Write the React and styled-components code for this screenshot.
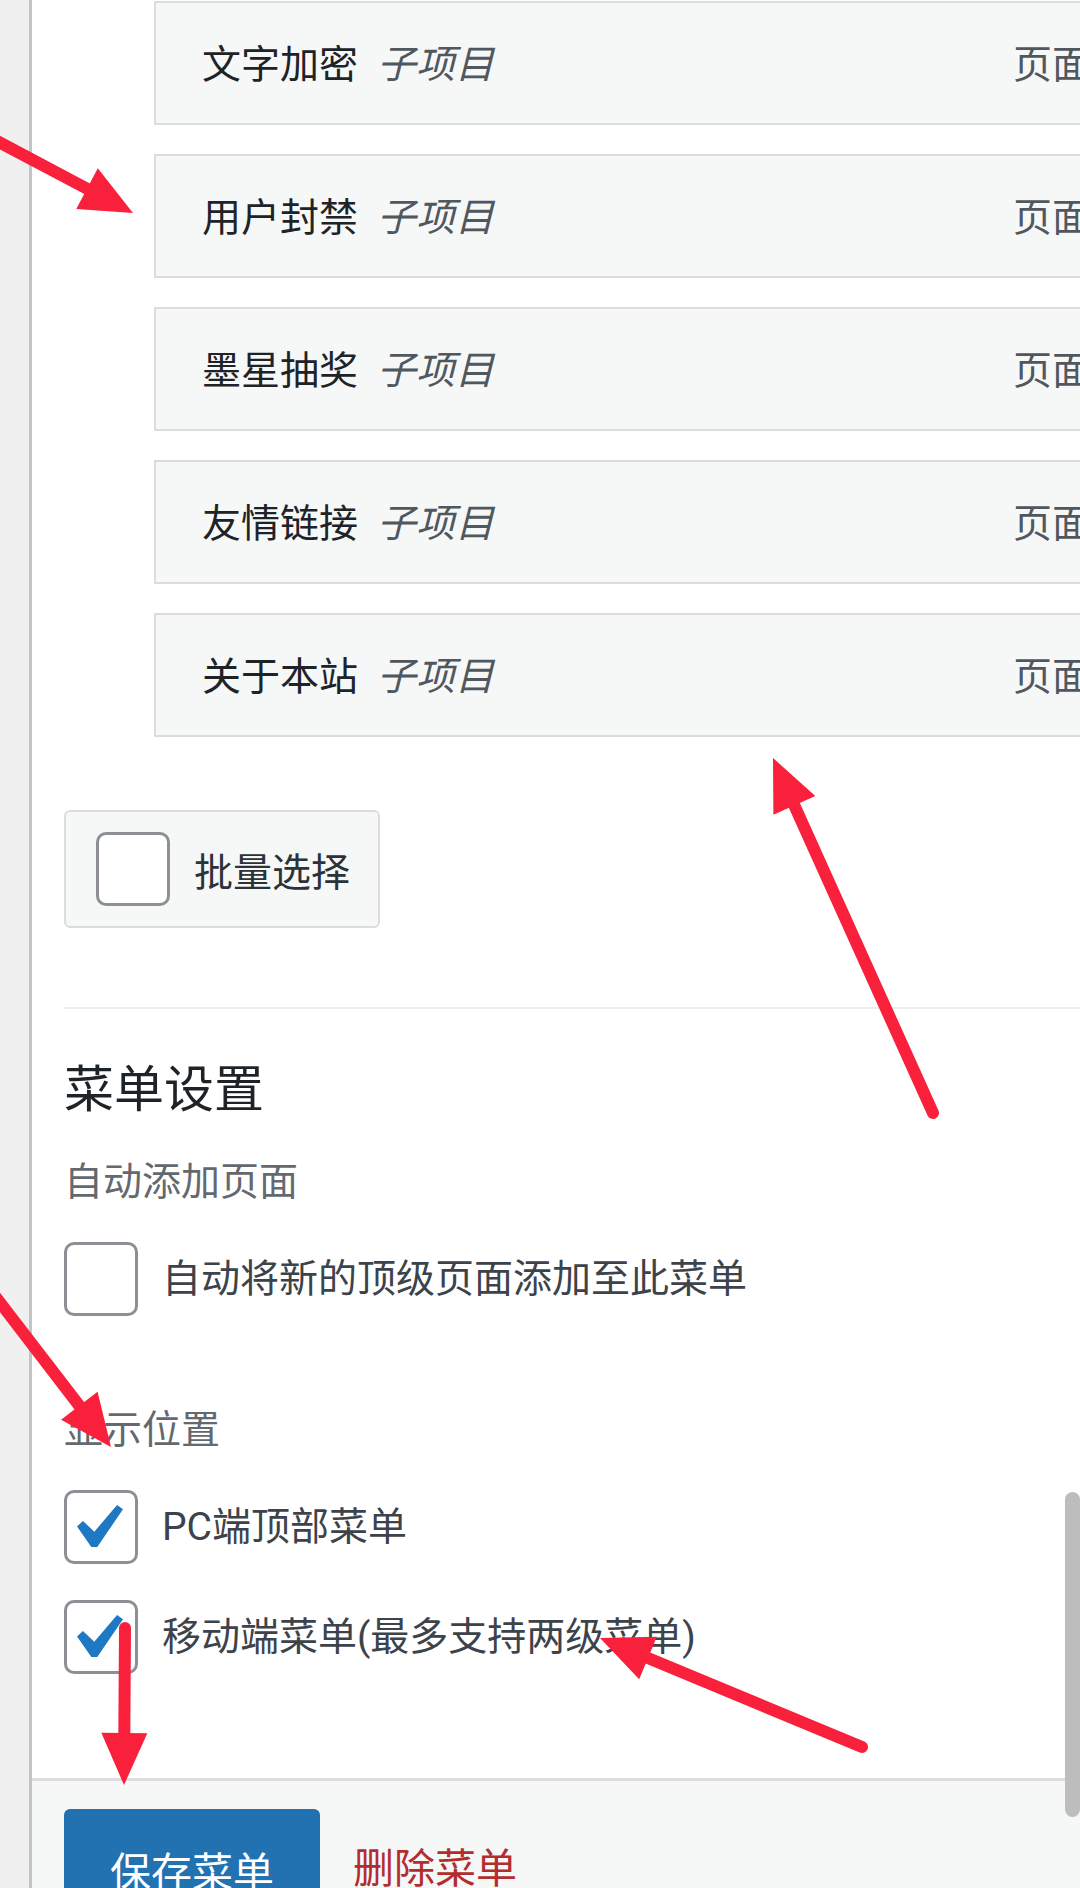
import React from "react";
import styled, { createGlobalStyle } from "styled-components";

const GlobalStyle = createGlobalStyle`
  html, body {
    margin: 0;
    padding: 0;
    background: #fff;
  }
  body {
    width: 1080px;
    height: 1888px;
    overflow: hidden;
    font-family: Roboto, "Noto Sans CJK SC", sans-serif;
  }
`;

const menuItems = ["文字加密", "用户封禁", "墨星抽奖", "友情链接", "关于本站"];

const arrows = [
  { from: [-20, 132], to: [133, 213] },
  { from: [933, 1113], to: [773, 758] },
  { from: [-15, 1283], to: [111, 1447] },
  { from: [125, 1628], to: [124, 1785] },
  { from: [862, 1747], to: [600, 1638] },
];

const Arrow = ({ from, to, len = 52, half = 23, width = 12 }) => {
  const dx = to[0] - from[0];
  const dy = to[1] - from[1];
  const d = Math.hypot(dx, dy);
  const ux = dx / d;
  const uy = dy / d;
  const bx = to[0] - ux * len;
  const by = to[1] - uy * len;
  const nx = -uy;
  const ny = ux;
  const points = `${to[0]},${to[1]} ${bx + nx * half},${by + ny * half} ${bx - nx * half},${by - ny * half}`;
  return (
    <g>
      <line
        x1={from[0]}
        y1={from[1]}
        x2={bx + ux * 6}
        y2={by + uy * 6}
        stroke="#f8203a"
        strokeWidth={width}
        strokeLinecap="round"
      />
      <polygon points={points} fill="#f8203a" />
    </g>
  );
};

const CheckMark = () => (
  <CheckSvg viewBox="5.78 4.89 10.39 9.32" preserveAspectRatio="none">
    <path d="M14.83 4.89l1.34.94-5.81 8.38H9.02L5.78 9.67l1.34-1.25 2.57 2.4z" fill="#1e78c2" />
  </CheckSvg>
);

const Checkbox = ({ checked }) => <Box>{checked ? <CheckMark /> : null}</Box>;

const App = () => {
  return (
    <Screen>
      <GlobalStyle />
      <Gutter />
      <Panel>
        <Body>
          <ItemList>
            {menuItems.map((name) => (
              <Item key={name}>
                <ItemTitle>{name}</ItemTitle>
                <SubTag>子项目</SubTag>
                <ItemType>页面</ItemType>
              </Item>
            ))}
          </ItemList>

          <BulkBox>
            <Checkbox />
            <span>批量选择</span>
          </BulkBox>

          <Divider />

          <Heading>菜单设置</Heading>

          <FieldLabel $top={34}>自动添加页面</FieldLabel>
          <CheckRow $top={34}>
            <Checkbox />
            <span>自动将新的顶级页面添加至此菜单</span>
          </CheckRow>

          <FieldLabel $top={88}>显示位置</FieldLabel>
          <CheckRow $top={34}>
            <Checkbox checked />
            <span>PC端顶部菜单</span>
          </CheckRow>
          <CheckRow $top={36}>
            <Checkbox checked />
            <span>移动端菜单(最多支持两级菜单)</span>
          </CheckRow>
        </Body>

        <Footer>
          <SaveButton>保存菜单</SaveButton>
          <DeleteLink>删除菜单</DeleteLink>
        </Footer>
      </Panel>

      <ScrollThumb />

      <Annotations viewBox="0 0 1080 1888">
        {arrows.map((a, i) => (
          <Arrow key={i} from={a.from} to={a.to} />
        ))}
      </Annotations>
    </Screen>
  );
};

export default App;

const Screen = styled.div`
  position: relative;
  display: flex;
  width: 1080px;
  height: 1888px;
  overflow: hidden;
  background: #fff;
`;

const Gutter = styled.div`
  flex: 0 0 29px;
  background: #f0f0f1;
  border-right: 3px solid #c3c4c7;
`;

const Panel = styled.div`
  flex: 0 0 1200px;
  display: flex;
  flex-direction: column;
  background: #fff;
`;

const Body = styled.div`
  display: flex;
  flex-direction: column;
  align-items: flex-start;
  padding: 1px 0 0 32px;
`;

const ItemList = styled.div`
  display: flex;
  flex-direction: column;
  gap: 29px;
  margin-left: 90px;
`;

const Item = styled.div`
  box-sizing: border-box;
  width: 1000px;
  height: 124px;
  display: flex;
  align-items: center;
  padding: 0 61px 4px 46px;
  background: #f6f7f7;
  border: 2px solid #dcdcde;
  font-size: 39px;
`;

const ItemTitle = styled.span`
  color: #1d2327;
`;

const SubTag = styled.span`
  margin-left: 19px;
  color: #50575e;
  font-style: italic;
`;

const ItemType = styled.span`
  margin-left: auto;
  color: #50575e;
`;

const BulkBox = styled.div`
  box-sizing: border-box;
  margin-top: 73px;
  width: 316px;
  height: 118px;
  display: flex;
  align-items: center;
  gap: 24px;
  padding-left: 30px;
  background: #f6f7f7;
  border: 2px solid #dcdcde;
  border-radius: 6px;
  font-size: 39px;
  color: #2c3338;
`;

const Box = styled.div`
  position: relative;
  box-sizing: border-box;
  flex: 0 0 74px;
  width: 74px;
  height: 74px;
  background: #fff;
  border: 3px solid #8c8f94;
  border-radius: 10px;
`;

const CheckSvg = styled.svg`
  position: absolute;
  left: 10px;
  top: 12px;
  width: 46px;
  height: 42px;
`;

const Divider = styled.div`
  align-self: stretch;
  margin-top: 79px;
  border-top: 2px solid #ececed;
`;

const Heading = styled.h3`
  margin: 49px 0 0;
  font-size: 50px;
  line-height: 64px;
  font-weight: 400;
  color: #1d2327;
`;

const FieldLabel = styled.div`
  margin-top: ${(p) => p.$top}px;
  font-size: 39px;
  line-height: 52px;
  color: #646970;
`;

const CheckRow = styled.div`
  margin-top: ${(p) => p.$top}px;
  display: flex;
  align-items: center;
  gap: 24px;
  font-size: 39px;
  line-height: 52px;
  color: #3c434a;
`;

const Footer = styled.div`
  flex: 1;
  margin-top: 104px;
  display: flex;
  align-items: flex-start;
  gap: 33px;
  padding: 28px 0 0 32px;
  background: #f6f7f7;
  border-top: 3px solid #dcdcde;
`;

const SaveButton = styled.div`
  box-sizing: border-box;
  width: 256px;
  height: 120px;
  display: flex;
  align-items: center;
  justify-content: center;
  background: #2271b1;
  border-radius: 6px;
  color: #fff;
  font-size: 41px;
`;

const DeleteLink = styled.div`
  height: 120px;
  line-height: 120px;
  font-size: 41px;
  color: #b32d2e;
`;

const ScrollThumb = styled.div`
  position: absolute;
  right: 0;
  top: 1492px;
  width: 15px;
  height: 325px;
  background: #bdbdbd;
  border-radius: 8px;
`;

const Annotations = styled.svg`
  position: absolute;
  left: 0;
  top: 0;
  width: 1080px;
  height: 1888px;
  pointer-events: none;
`;
